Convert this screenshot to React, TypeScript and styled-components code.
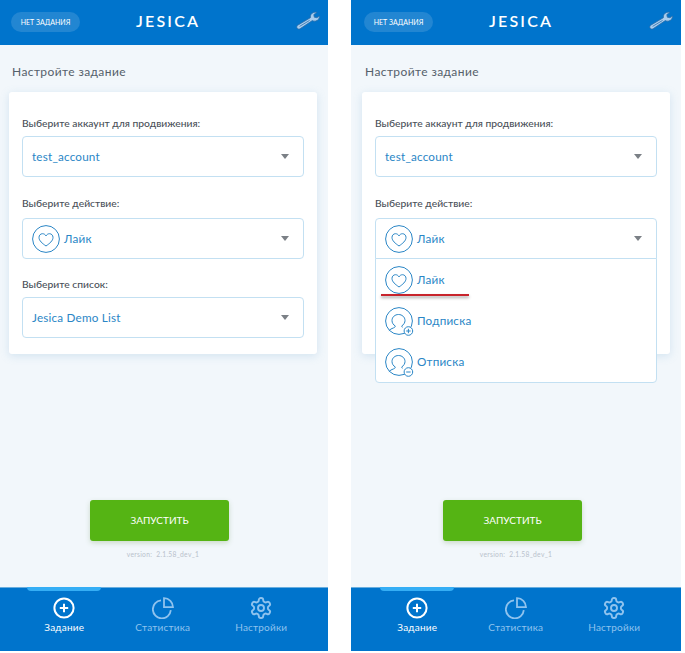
import React from "react";
import styled, { createGlobalStyle } from "styled-components";

const GlobalStyle = createGlobalStyle`
    html, body {
        margin: 0;
        padding: 0;
        background: #fff;
    }
    body {
        font-family: Lato, "Noto Sans", "Liberation Sans", sans-serif;
    }
`;

const HeartIcon = () => (
    <IconSvg viewBox="0 0 28 28" fill="none" stroke="#2a86c6" strokeWidth="1">
        <circle cx="14" cy="14" r="13.4" />
        <path d="M14 21c-3.8-2.7-7-5.2-7-8.6 0-2.2 1.6-3.7 3.5-3.7 1.5 0 2.7.8 3.5 2.2.8-1.4 2-2.2 3.5-2.2 1.9 0 3.5 1.5 3.5 3.7 0 3.4-3.2 5.9-7 8.6z" />
    </IconSvg>
);

const PersonIcon = ({ minus }: { minus?: boolean }) => (
    <IconSvg viewBox="0 0 28 28" fill="none" stroke="#2a86c6" strokeWidth="1">
        <circle cx="14" cy="14" r="13.4" />
        <path d="M13.5 7.5c-3.6 0-6.5 2.6-6.5 6 0 2.3 1.3 4.4 3.2 5.4.2 1-.5 1.6-1.7 2-1.8.6-3.4 1.4-4.6 2.8" />
        <path d="M13.5 7.5c3.6 0 6.5 2.6 6.5 6 0 2-1.2 4.2-3.2 5.4 0 .6.2 1.1.6 1.5" />
        <circle cx="23.4" cy="24" r="4.3" fill="#fff" />
        <path d={minus ? "M21.2 24h4.4" : "M21.2 24h4.4M23.4 21.8v4.4"} />
    </IconSvg>
);

const WrenchIcon = () => (
    <svg width="24" height="19" viewBox="0 0 24 19" fill="#a9cdee" stroke="#2f6ea8" strokeWidth="0.8">
        <path d="M1.4 14.4 14.4 6.7c-.3-2.5 1-4.6 3.4-5.3 1-.3 2-.3 3 0l-3 2.2.5 2.6 2.6.5 2.6-1.6c.1 2.6-1.5 4.5-4 5-1.2.2-2.2 0-3.2-.5L4 17.8c-1.1.6-2.3.3-2.9-.7-.5-.9-.3-2 .3-2.7z" />
        <path d="M3.6 15.4 13.6 9.4" stroke="#2f6ea8" fill="none" />
    </svg>
);

type SelectProps = {
    value: string;
    withIcon?: boolean;
    open?: boolean;
};

const Select = ({ value, withIcon, open }: SelectProps) => (
    <SelectBox open={open}>
        {withIcon && <HeartIcon />}
        <SelectValue withIcon={withIcon}>{value}</SelectValue>
        <Caret />
    </SelectBox>
);

const DropdownMenu = () => (
    <Menu>
        <MenuItem>
            <HeartIcon />
            <SelectValue withIcon>Лайк</SelectValue>
            <RedLine />
        </MenuItem>
        <MenuItem>
            <PersonIcon />
            <SelectValue withIcon>Подписка</SelectValue>
        </MenuItem>
        <MenuItem>
            <PersonIcon minus />
            <SelectValue withIcon>Отписка</SelectValue>
        </MenuItem>
    </Menu>
);

const Phone = ({ open }: { open?: boolean }) => (
    <Screen wide={open}>
        <Header wide={open}>
            <StatusPill>НЕТ ЗАДАНИЯ</StatusPill>
            <Logo>JESICA</Logo>
            <WrenchSlot>
                <WrenchIcon />
            </WrenchSlot>
        </Header>
        <Content wide={open}>
            <Title>Настройте задание</Title>
            <Card>
                <Field>
                    <Label>Выберите аккаунт для продвижения:</Label>
                    <Select value="test_account" />
                </Field>
                <Field tight>
                    <Label roomy>Выберите действие:</Label>
                    <SelectWrap>
                        <Select value="Лайк" withIcon open={open} />
                        {open && <DropdownMenu />}
                    </SelectWrap>
                </Field>
                <Field last covered={open}>
                    <Label>Выберите список:</Label>
                    <Select value="Jesica Demo List" />
                </Field>
            </Card>
            <Footer>
                <StartButton>ЗАПУСТИТЬ</StartButton>
                <Version>version:&nbsp; 2.1.58_dev_1</Version>
            </Footer>
        </Content>
        <TabBar wide={open}>
            <Tab>
                <Indicator />
                <svg width="22" height="22" viewBox="0 0 22 22" fill="none" stroke="#fff" strokeWidth="2">
                    <circle cx="11" cy="11" r="9.6" />
                    <path d="M11 6.8v8.4M6.8 11h8.4" />
                </svg>
                <TabLabel active>Задание</TabLabel>
            </Tab>
            <Tab>
                <svg width="22" height="22" viewBox="0 0 22 22" fill="none" stroke="#8fc3ee" strokeWidth="1.8">
                    <path d="M9 3.4a9 9 0 1 0 9.8 9.8" />
                    <path d="M12 1.2v9h9a9 9 0 0 0-9-9z" />
                </svg>
                <TabLabel>Статистика</TabLabel>
            </Tab>
            <Tab>
                <GearSvg viewBox="0 0 24 24" fill="none" stroke="#8fc3ee" strokeWidth="1.9" strokeLinejoin="round">
                    <path d="M12.22 2h-.44a2 2 0 0 0-2 2v.18a2 2 0 0 1-1 1.73l-.43.25a2 2 0 0 1-2 0l-.15-.08a2 2 0 0 0-2.73.73l-.22.38a2 2 0 0 0 .73 2.73l.15.1a2 2 0 0 1 1 1.72v.51a2 2 0 0 1-1 1.74l-.15.09a2 2 0 0 0-.73 2.73l.22.38a2 2 0 0 0 2.73.73l.15-.08a2 2 0 0 1 2 0l.43.25a2 2 0 0 1 1 1.73V20a2 2 0 0 0 2 2h.44a2 2 0 0 0 2-2v-.18a2 2 0 0 1 1-1.73l.43-.25a2 2 0 0 1 2 0l.15.08a2 2 0 0 0 2.73-.73l.22-.39a2 2 0 0 0-.73-2.73l-.15-.08a2 2 0 0 1-1-1.74v-.5a2 2 0 0 1 1-1.74l.15-.09a2 2 0 0 0 .73-2.73l-.22-.38a2 2 0 0 0-2.73-.73l-.15.08a2 2 0 0 1-2 0l-.43-.25a2 2 0 0 1-1-1.73V4a2 2 0 0 0-2-2z" />
                    <circle cx="12" cy="12" r="3" />
                </GearSvg>
                <TabLabel>Настройки</TabLabel>
            </Tab>
        </TabBar>
    </Screen>
);

export default function App() {
    return (
        <Page>
            <GlobalStyle />
            <Phone />
            <Phone open />
        </Page>
    );
}

const Page = styled.div`
    display: flex;
    gap: 23px;
    width: 685px;
    height: 653px;
    overflow: hidden;
`;

const Screen = styled.div<{ wide?: boolean }>`
    display: flex;
    flex-direction: column;
    width: ${({ wide }) => (wide ? 330 : 328)}px;
    height: 651px;
    background: #f2f7fb;
`;

const Header = styled.div<{ wide?: boolean }>`
    display: flex;
    align-items: center;
    height: 45px;
    padding: 0 8px 2px ${({ wide }) => (wide ? 13 : 11)}px;
    background: #0074cc;
    box-sizing: border-box;
`;

const StatusPill = styled.div`
    width: 69px;
    height: 20px;
    border-radius: 10px;
    background: #2286d2;
    color: #fff;
    font-size: 7px;
    line-height: 20px;
    text-align: center;
    white-space: nowrap;
`;

const Logo = styled.div`
    margin: 0 0 2px 56px;
    color: #fff;
    font-size: 16px;
    font-weight: 600;
    letter-spacing: 2.2px;
`;

const WrenchSlot = styled.div`
    display: flex;
    margin: 0 0 2px auto;
`;

const Content = styled.div<{ wide?: boolean }>`
    flex: 1;
    display: flex;
    flex-direction: column;
    padding: 19px 11px 0 ${({ wide }) => (wide ? 11 : 9)}px;
    min-height: 0;
`;

const Title = styled.div`
    margin-left: 3px;
    color: #55606a;
    font-size: 12px;
    line-height: 16px;
    letter-spacing: 0.4px;
`;

const Card = styled.div`
    margin-top: 12px;
    padding: 24px 13px 16px;
    background: #fff;
    border-radius: 3px;
    box-shadow: 0 2px 8px rgba(120, 170, 210, 0.25);
`;

const Field = styled.div<{ last?: boolean; tight?: boolean; covered?: boolean }>`
    margin-bottom: ${({ last, tight }) => (last ? 0 : tight ? 18 : 19)}px;
    visibility: ${({ covered }) => (covered ? "hidden" : "visible")};
`;

const Label = styled.div<{ roomy?: boolean }>`
    margin-bottom: ${({ roomy }) => (roomy ? 8 : 6)}px;
    color: #4a5058;
    font-size: 10.3px;
    font-weight: 500;
    line-height: 14px;
`;

const SelectWrap = styled.div`
    position: relative;
`;

const SelectBox = styled.div<{ open?: boolean }>`
    display: flex;
    align-items: center;
    height: 41px;
    padding: 0 14px 0 9px;
    box-sizing: border-box;
    background: #fff;
    border: 1px solid #c3e0f2;
    border-radius: ${({ open }) => (open ? "4px 4px 0 0" : "4px")};
`;

const IconSvg = styled.svg`
    flex: none;
    width: 28px;
    height: 28px;
    overflow: visible;
`;

const GearSvg = styled.svg`
    width: 24px;
    height: 24px;
    margin: -1px;
`;

const SelectValue = styled.div<{ withIcon?: boolean }>`
    flex: 1;
    margin: 0 0 2px ${({ withIcon }) => (withIcon ? 4 : 0)}px;
    color: #2a86c6;
    font-size: 11.7px;
    letter-spacing: 0.2px;
`;

const Caret = styled.div`
    width: 0;
    height: 0;
    border-left: 4.5px solid transparent;
    border-right: 4.5px solid transparent;
    border-top: 5px solid #7b8086;
`;

const Menu = styled.div`
    position: absolute;
    top: 40px;
    left: 0;
    right: 0;
    z-index: 2;
    background: #fff;
    border: 1px solid #c3e0f2;
    border-radius: 0 0 4px 4px;
`;

const MenuItem = styled.div`
    position: relative;
    display: flex;
    align-items: center;
    height: 41px;
    padding-left: 9px;
`;

const RedLine = styled.div`
    position: absolute;
    left: 5px;
    top: 35px;
    width: 88px;
    height: 2px;
    background: #c8242c;
    box-shadow: 0 2px 3px rgba(0, 0, 0, 0.35);
`;

const Footer = styled.div`
    margin-top: auto;
    padding-bottom: 28px;
    display: flex;
    flex-direction: column;
    align-items: center;
`;

const StartButton = styled.div`
    width: 139px;
    height: 41px;
    margin-right: 7px;
    border-radius: 3px;
    background: #55b414;
    box-shadow: 0 2px 5px rgba(90, 140, 60, 0.25);
    color: #fff;
    font-size: 10px;
    line-height: 41px;
    text-align: center;
`;

const Version = styled.div`
    margin-top: 8px;
    color: #b9c2cc;
    font-size: 6.7px;
    line-height: 10px;
    letter-spacing: 0.3px;
`;

const TabBar = styled.div<{ wide?: boolean }>`
    display: flex;
    height: 64px;
    padding-left: ${({ wide }) => (wide ? 17 : 15)}px;
    background: #0074cc;
    border-top: 1px solid #69aede;
    box-sizing: border-box;
`;

const Tab = styled.div`
    position: relative;
    width: 98.5px;
    display: flex;
    flex-direction: column;
    align-items: center;
    padding-top: 9px;
    box-sizing: border-box;
`;

const Indicator = styled.div`
    position: absolute;
    top: -1px;
    left: 12px;
    width: 74px;
    height: 4px;
    border-radius: 0 0 4px 4px;
    background: #35aef5;
`;

const TabLabel = styled.div<{ active?: boolean }>`
    margin-top: 2px;
    color: ${({ active }) => (active ? "#fff" : "#8fc3ee")};
    font-size: 10px;
    line-height: 13px;
    letter-spacing: 0.2px;
`;
